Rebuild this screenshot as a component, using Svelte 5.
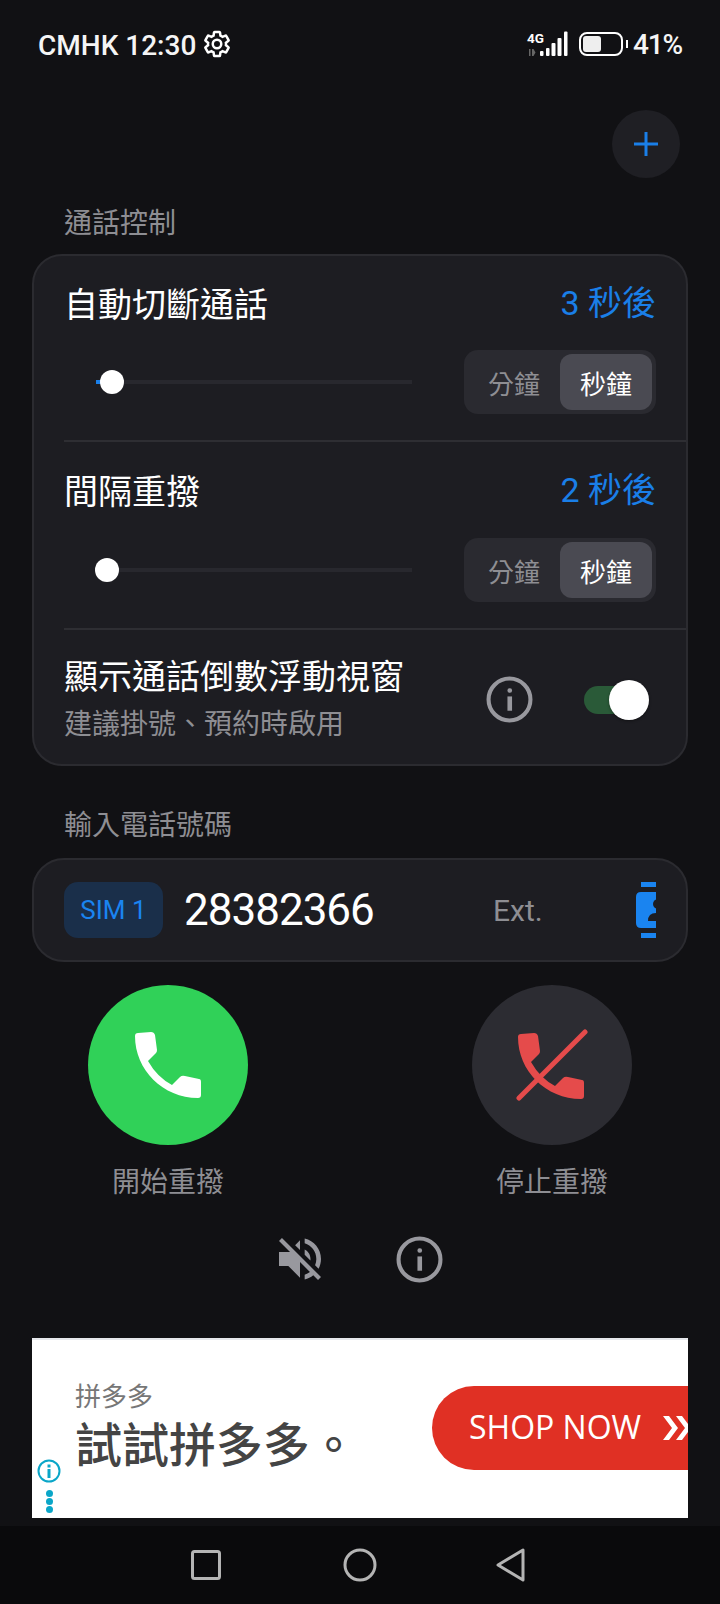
<script>
  const rows = [
    { title: '自動切斷通話', value: '3 秒後', fill: 8, thumb: 16 },
    { title: '間隔重撥', value: '2 秒後', fill: 0, thumb: 11 }
  ];
  const phone = 'M3 1 L16 0 Q19 0 20 3 L22 18 Q22 20 21 21 L13 29 Q22 45 37 53 L45 45 Q47 43 50 44 L64 47 Q66 47 66 50 L66 63 Q66 66 63 66 C28 66 0 38 0 4 Q0 1 3 1 Z';
</script>

<div class="page">
  <header class="status">
    <div class="left">
      <span>CMHK 12:30</span>
      <svg class="gear" viewBox="0 0 24 24"><path d="M19.14 12.94c.04-.3.06-.61.06-.94 0-.32-.02-.64-.07-.94l2.03-1.58c.18-.14.23-.41.12-.61l-1.92-3.32c-.12-.22-.37-.29-.59-.22l-2.39.96c-.5-.38-1.03-.7-1.62-.94l-.36-2.54c-.04-.24-.24-.41-.48-.41h-3.84c-.24 0-.43.17-.47.41l-.36 2.54c-.59.24-1.13.57-1.62.94l-2.39-.96c-.22-.08-.47 0-.59.22L2.74 8.87c-.12.21-.08.47.12.61l2.03 1.58c-.05.3-.09.63-.09.94s.02.64.07.94l-2.03 1.58c-.18.14-.23.41-.12.61l1.92 3.32c.12.22.37.29.59.22l2.39-.96c.5.38 1.03.7 1.62.94l.36 2.54c.05.24.24.41.48.41h3.84c.24 0 .44-.17.47-.41l.36-2.54c.59-.24 1.13-.56 1.62-.94l2.39.96c.22.08.47 0 .59-.22l1.92-3.32c.12-.22.07-.47-.12-.61l-2.01-1.58z" fill="none" stroke="#fff" stroke-width="2"/><circle cx="12" cy="12" r="3.4" fill="none" stroke="#fff" stroke-width="2"/></svg>
    </div>
    <div class="right">
      <svg class="signal" viewBox="0 0 44 28">
        <text x="2" y="13" class="fg">4G</text>
        <path d="M4 19v7h1.500v-7zM7 19v7h1.500l2-3.500-2-3.500z" fill="#666"/>
        <g fill="#fff">
          <rect x="15" y="21" width="3.500" height="5" rx="1"/>
          <rect x="21" y="18" width="3.500" height="8" rx="1"/>
          <rect x="26.500" y="13" width="4" height="13" rx="1"/>
          <rect x="32.500" y="8" width="4" height="18" rx="1"/>
          <rect x="39" y="1.500" width="3.500" height="24.500" rx="1"/>
        </g>
      </svg>
      <div class="battery"><div class="level"></div></div>
      <div class="nub"></div>
      <span class="pct">41%</span>
    </div>
  </header>

  <div class="addbar">
    <button class="add" aria-label="新增">
      <svg viewBox="0 0 24 24" width="24" height="24"><path d="M12 0v24M0 12h24" stroke="#1a7fe8" stroke-width="3"/></svg>
    </button>
  </div>

  <div class="label first">通話控制</div>

  <section class="card">
    {#each rows as r, i}
      <div class="row" class:second={i === 1}>
        <div class="titleline">
          <span class="title">{r.title}</span>
          <span class="value">{r.value}</span>
        </div>
        <div class="controls">
          <div class="slider">
            <div class="fill" style="width:{r.fill}px"></div>
            <div class="thumb" style="left:{r.thumb}px"></div>
          </div>
          <div class="seg">
            <span class="opt">分鐘</span>
            <span class="opt on">秒鐘</span>
          </div>
        </div>
      </div>
    {/each}
    <div class="row toggle-row">
      <div class="texts">
        <div class="title">顯示通話倒數浮動視窗</div>
        <div class="sub">建議掛號、預約時啟用</div>
      </div>
      <svg class="info" viewBox="0 0 46 46"><circle cx="23" cy="23" r="20.500" fill="none" stroke="#98989e" stroke-width="4"/><rect x="21" y="20" width="4.500" height="14" fill="#98989e"/><rect x="21" y="12" width="4.500" height="4.500" rx="2" fill="#98989e"/></svg>
      <div class="toggle"><div class="knob"></div></div>
    </div>
  </section>

  <div class="label second-label">輸入電話號碼</div>

  <section class="input">
    <span class="sim">SIM 1</span>
    <span class="number">28382366</span>
    <span class="ext">Ext.</span>
    <svg class="contact" viewBox="0 0 20 56" width="20" height="56">
      <rect x="5" y="0" width="15" height="5" fill="#1a84f0"/>
      <rect x="5" y="51" width="15" height="5" fill="#1a84f0"/>
      <path d="M5 10H20V46H5Q0 46 0 41V15Q0 10 5 10Z" fill="#1a84f0"/>
      <circle cx="22" cy="22" r="5" fill="#1d1d22"/>
      <path d="M12 39Q12 31 20 31V39Z" fill="#1d1d22"/>
    </svg>
  </section>

  <div class="actions">
    <div class="action">
      <div class="circle go">
        <svg viewBox="0 0 66 66" width="66" height="66"><path d={phone} fill="#fff"/></svg>
      </div>
      <span>開始重撥</span>
    </div>
    <div class="action">
      <div class="circle stop">
        <svg viewBox="0 0 72 72" width="72" height="72"><path transform="translate(2 4)" d={phone} fill="#e54b4b"/><path d="M69 3L3 69" stroke="#e54b4b" stroke-width="5" stroke-linecap="round"/></svg>
      </div>
      <span>停止重撥</span>
    </div>
  </div>

  <div class="tools">
    <svg viewBox="0 0 24 24" width="56" height="56"><path fill="#98989e" d="M16.500 12c0-1.770-1.020-3.290-2.500-4.030v2.210l2.450 2.450c.03-.2.05-.41.05-.63zm2.500 0c0 .94-.2 1.820-.54 2.640l1.510 1.510C20.630 14.910 21 13.500 21 12c0-4.280-2.990-7.860-7-8.770v2.060c2.890.86 5 3.540 5 6.710zM4.270 3L3 4.270 7.730 9H3v6h4l5 5v-6.730l4.250 4.250c-.67.52-1.420.93-2.250 1.180v2.060c1.380-.31 2.630-.95 3.690-1.810L19.730 21 21 19.730l-9-9L4.270 3zM12 4L9.910 6.090 12 8.180V4z"/></svg>
    <svg class="info" viewBox="0 0 46 46"><circle cx="23" cy="23" r="20.500" fill="none" stroke="#98989e" stroke-width="4"/><rect x="21" y="20" width="4.500" height="14" fill="#98989e"/><rect x="21" y="12" width="4.500" height="4.500" rx="2" fill="#98989e"/></svg>
  </div>

  <aside class="ad">
    <div class="adtext">
      <div class="brand">拼多多</div>
      <div class="headline">試試拼多多。</div>
    </div>
    <div class="shop">
      <span>SHOP NOW</span>
      <svg viewBox="0 0 30 24" width="30" height="24"><path d="M0 0h6l9 12-9 12H0l9-12zM13 0h6l9 12-9 12h-6l9-12z" fill="#fff"/></svg>
    </div>
    <div class="adchoice">
      <svg viewBox="0 0 24 24" width="24" height="24"><circle cx="12" cy="12" r="10.500" fill="none" stroke="#0aa6c8" stroke-width="2"/><rect x="10.500" y="10" width="3" height="9" fill="#0aa6c8"/><rect x="10.500" y="5.500" width="3" height="3" fill="#0aa6c8"/></svg>
      <i></i><i></i><i></i>
    </div>
  </aside>

  <nav class="nav">
    <svg viewBox="0 0 30 30" width="30" height="30"><rect x="1.500" y="1.500" width="27" height="27" rx="2" fill="none" stroke="#b4b4b4" stroke-width="3"/></svg>
    <svg viewBox="0 0 34 34" width="34" height="34"><circle cx="17" cy="17" r="15" fill="none" stroke="#b4b4b4" stroke-width="3"/></svg>
    <svg class="back" viewBox="0 0 30 34" width="30" height="34"><path d="M27 2V32L2 17Z" fill="none" stroke="#b4b4b4" stroke-width="3" stroke-linejoin="round"/></svg>
  </nav>
</div>

<style>
  :global(body) { margin: 0; background: #111114; }
  .page {
    width: 720px; height: 1604px; background: #111114; overflow: hidden;
    font-family: "Noto Sans CJK TC", Roboto, sans-serif; color: #fff;
    display: flex; flex-direction: column;
  }
  .status {
    height: 88px; box-sizing: border-box; padding: 0 39px 0 38px;
    display: flex; justify-content: space-between; align-items: center;
    font-family: Roboto, sans-serif; font-size: 28px; font-weight: 500; color: #f5f5f5;
    flex: none;
  }
  .left, .right { display: flex; align-items: center; }
  .left span, .pct { padding-top: 2px; }
  .gear { width: 30px; height: 30px; margin-left: 6px; }
  .signal { width: 44px; height: 28px; margin-right: 10px; }
  .fg { font: 700 13.500px Roboto, sans-serif; fill: #fff; }
  .battery {
    width: 44px; height: 24px; box-sizing: border-box; border: 2px solid #fff; border-radius: 8px;
    padding: 2px;
  }
  .level { width: 18px; height: 16px; background: #eee; border-radius: 3px; }
  .nub { width: 2px; height: 8px; background: #fff; margin: 0 5px 0 3px; }
  .pct { line-height: 1; width: 48px; letter-spacing: -1.2px; white-space: nowrap; }
  .addbar { display: flex; justify-content: flex-end; padding: 22px 40px 0 0; flex: none; }
  .add {
    width: 68px; height: 68px; border: 0; border-radius: 50%; background: #1f1f24; padding: 0;
    display: flex; align-items: center; justify-content: center;
  }
  .label { font-size: 28px; line-height: 40px; color: #8e8e93; padding-left: 64px; flex: none; }
  .first { margin-top: 23px; }
  .second-label { margin-top: 37px; }
  .card {
    margin: 13px 32px 0; height: 512px; box-sizing: border-box; flex: none;
    background: #1d1d22; border: 2px solid #2b2b30; border-radius: 30px; overflow: hidden;
  }
  .row { margin-left: 30px; border-bottom: 2px solid #2e2e33; height: 186px; box-sizing: border-box; padding: 25px 30px 0 0; }
  .row.second { height: 188px; padding-top: 26px; }
  .row.second .controls { margin-top: 26px; }
  .titleline { display: flex; justify-content: space-between; align-items: center; height: 44px; }
  .title { font-size: 34px; line-height: 44px; color: #fff; }
  .value { font-size: 34px; line-height: 44px; color: #1a7fe8; font-weight: 400; font-family: Roboto, "Noto Sans CJK TC", sans-serif; }
  .controls { display: flex; align-items: center; justify-content: space-between; margin-top: 25px; }
  .slider { position: relative; width: 316px; height: 4px; margin-left: 32px; background: #28282e; }
  .fill { position: absolute; left: 0; top: 0; height: 4px; background: #1a7fe8; }
  .thumb {
    position: absolute; top: -10px; width: 24px; height: 24px; margin-left: -12px;
    border-radius: 50%; background: #fff;
  }
  .seg {
    width: 192px; height: 64px; box-sizing: border-box; padding: 4px; border-radius: 14px; background: #2a2a30;
    display: flex; justify-content: flex-end;
  }
  .opt {
    width: 92px; display: flex; align-items: center; justify-content: center;
    font-size: 26px; color: #8e8e93; border-radius: 12px;
  }
  .opt.on { background: #4a4a52; color: #fff; }
  .toggle-row { border-bottom: 0; height: auto; padding: 23px 0 0 0; display: flex; align-items: flex-start; }
  .texts { width: 416px; flex: none; }
  .sub { font-size: 28px; line-height: 40px; color: #8e8e93; margin-top: 5px; }
  .info { width: 47px; height: 47px; flex: none; }
  .toggle-row .info { margin-top: 23px; margin-left: 6px; }
  .toggle {
    position: relative; width: 56px; height: 28px; margin: 33px 0 0 51px; border-radius: 14px; background: #2a5a38; flex: none;
  }
  .knob {
    position: absolute; left: 25px; top: -6px; width: 40px; height: 40px; border-radius: 50%; background: #fff;
    box-shadow: 0 1px 3px rgba(0,0,0,.4);
  }
  .input {
    margin: 15px 32px 0; height: 104px; box-sizing: border-box; flex: none;
    background: #1d1d22; border: 2px solid #2b2b30; border-radius: 32px;
    display: flex; align-items: center; padding: 0 30px;
  }
  .sim {
    width: 99px; height: 56px; border-radius: 14px; background: #1a2f4a; color: #1a84f0;
    display: flex; align-items: center; justify-content: center; font: 400 26px Roboto, sans-serif; flex: none;
  }
  .number { font: 400 44px Roboto, sans-serif; letter-spacing: -1px; margin-left: 21px; width: 309px; flex: none; color: #fff; }
  .ext { font: 400 30px Roboto, sans-serif; color: #8e8e93; width: 143px; flex: none; }
  .contact { flex: none; }
  .actions { display: flex; padding-left: 88px; gap: 224px; margin-top: 23px; flex: none; }
  .action { width: 160px; display: flex; flex-direction: column; align-items: center; color: #8e8e93; font-size: 28px; line-height: 40px; }
  .action span { margin-top: 15px; }
  .circle { width: 160px; height: 160px; border-radius: 50%; display: flex; align-items: center; justify-content: center; }
  .go { background: #30d158; }
  .stop { background: #2c2c32; }
  .tools { display: flex; justify-content: center; align-items: center; gap: 68px; height: 56px; margin-top: 31px; padding-right: 6px; flex: none; }
  .ad {
    position: relative; margin: 51px 32px 0; height: 180px; box-sizing: border-box; background: #fff; border-top: 2px solid #e6e8ec;
    overflow: hidden; flex: none; display: flex; align-items: flex-start;
  }
  .adtext { padding: 39px 0 0 43px; width: 356px; flex: none; box-sizing: border-box; }
  .brand { font-size: 26px; line-height: 32px; color: #777; }
  .headline { font-size: 47px; line-height: 60px; font-weight: 500; color: #444; white-space: nowrap; margin-top: 1px; }
  .shop {
    margin: 46px 0 0 44px; width: 320px; height: 84px; flex: none; border-radius: 42px; background: #e03024; color: #fff;
    display: flex; align-items: center; font: 400 32px "Open Sans", sans-serif; padding: 0 0 3px 37px; box-sizing: border-box; gap: 22px;
  }
  .shop svg { flex: none; margin-top: 3px; }
  .adchoice { position: absolute; left: 5px; top: 119px; width: 24px; display: flex; flex-direction: column; align-items: center; }
  .adchoice svg { margin-bottom: 7px; }
  .adchoice i { display: block; width: 7px; height: 7px; margin-bottom: 1px; border-radius: 50%; background: #0aa6c8; }
  .nav {
    margin-top: 8px; height: 78px; background: #0a0a0c; flex: none;
    display: flex; align-items: center; justify-content: center; gap: 122px;
  }
  .back { margin-left: -3px; margin-right: 3px; }
</style>
